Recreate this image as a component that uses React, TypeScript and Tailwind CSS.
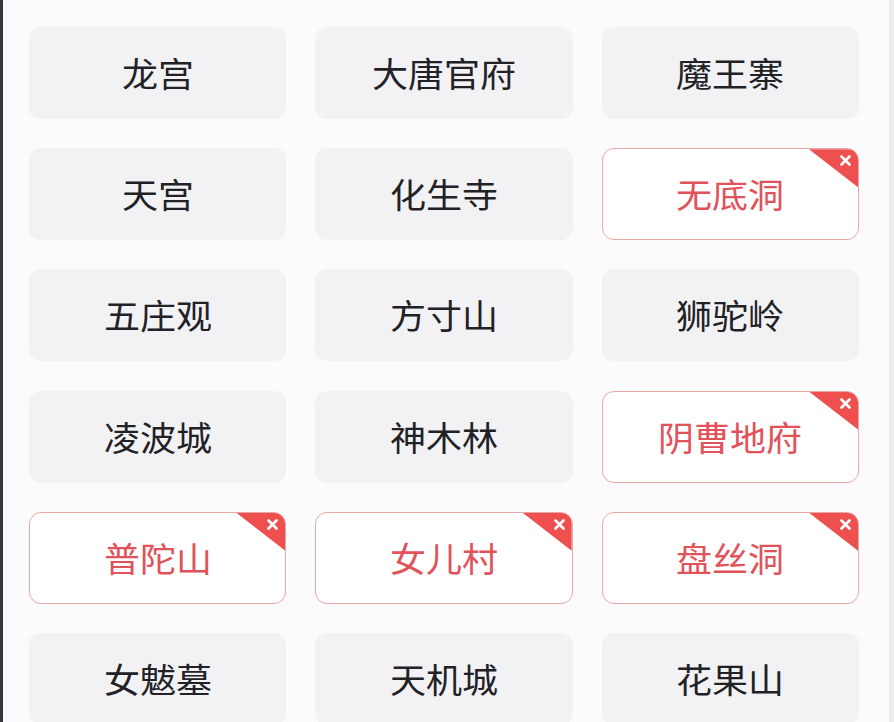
import React from "react";

const items: { name: string; active?: boolean }[] = [
  { name: "龙宫" },
  { name: "大唐官府" },
  { name: "魔王寨" },
  { name: "天宫" },
  { name: "化生寺" },
  { name: "无底洞", active: true },
  { name: "五庄观" },
  { name: "方寸山" },
  { name: "狮驼岭" },
  { name: "凌波城" },
  { name: "神木林" },
  { name: "阴曹地府", active: true },
  { name: "普陀山", active: true },
  { name: "女儿村", active: true },
  { name: "盘丝洞", active: true },
  { name: "女魃墓" },
  { name: "天机城" },
  { name: "花果山" },
];

export default function App() {
  return (
    <div
      className="flex h-[722px] w-[894px] overflow-hidden bg-[#fbfbfd]"
      style={{ fontFamily: '"Noto Sans CJK SC", "Noto Sans", sans-serif' }}
    >
      <div className="w-[3px] shrink-0 bg-[#3b3542]" />
      <div className="flex-1 pl-[26px] pr-[30px] pt-[27px]">
        <div className="grid grid-cols-3 auto-rows-[92px] gap-x-[29px] gap-y-[29.2px]">
          {items.map((it) =>
            it.active ? (
              <div
                key={it.name}
                className="relative flex items-center justify-center overflow-hidden rounded-[12px] border border-[#e8a8a8] bg-white text-[34px] text-[#e2525a]"
              >
                <span className="inline-block scale-x-[1.06] leading-none">{it.name}</span>
                <div
                  className="absolute right-0 top-0 h-[38px] w-[49px] bg-[#ee5050]"
                  style={{ clipPath: "polygon(0 0, 100% 0, 100% 100%)" }}
                />
                <svg
                  className="absolute right-[7px] top-[6px]"
                  width="11"
                  height="11"
                  viewBox="0 0 11 11"
                >
                  <path d="M1.5 1.5 L9.5 9.5 M9.5 1.5 L1.5 9.5" stroke="#fff" strokeWidth="2.6" strokeLinecap="round" />
                </svg>
              </div>
            ) : (
              <div
                key={it.name}
                className="flex items-center justify-center rounded-[12px] bg-[#f2f2f4] text-[34px] text-[#222226]"
              >
                <span className="inline-block scale-x-[1.06] leading-none">{it.name}</span>
              </div>
            )
          )}
        </div>
      </div>
      <div className="w-[5px] shrink-0 bg-[#ececee]" />
    </div>
  );
}
